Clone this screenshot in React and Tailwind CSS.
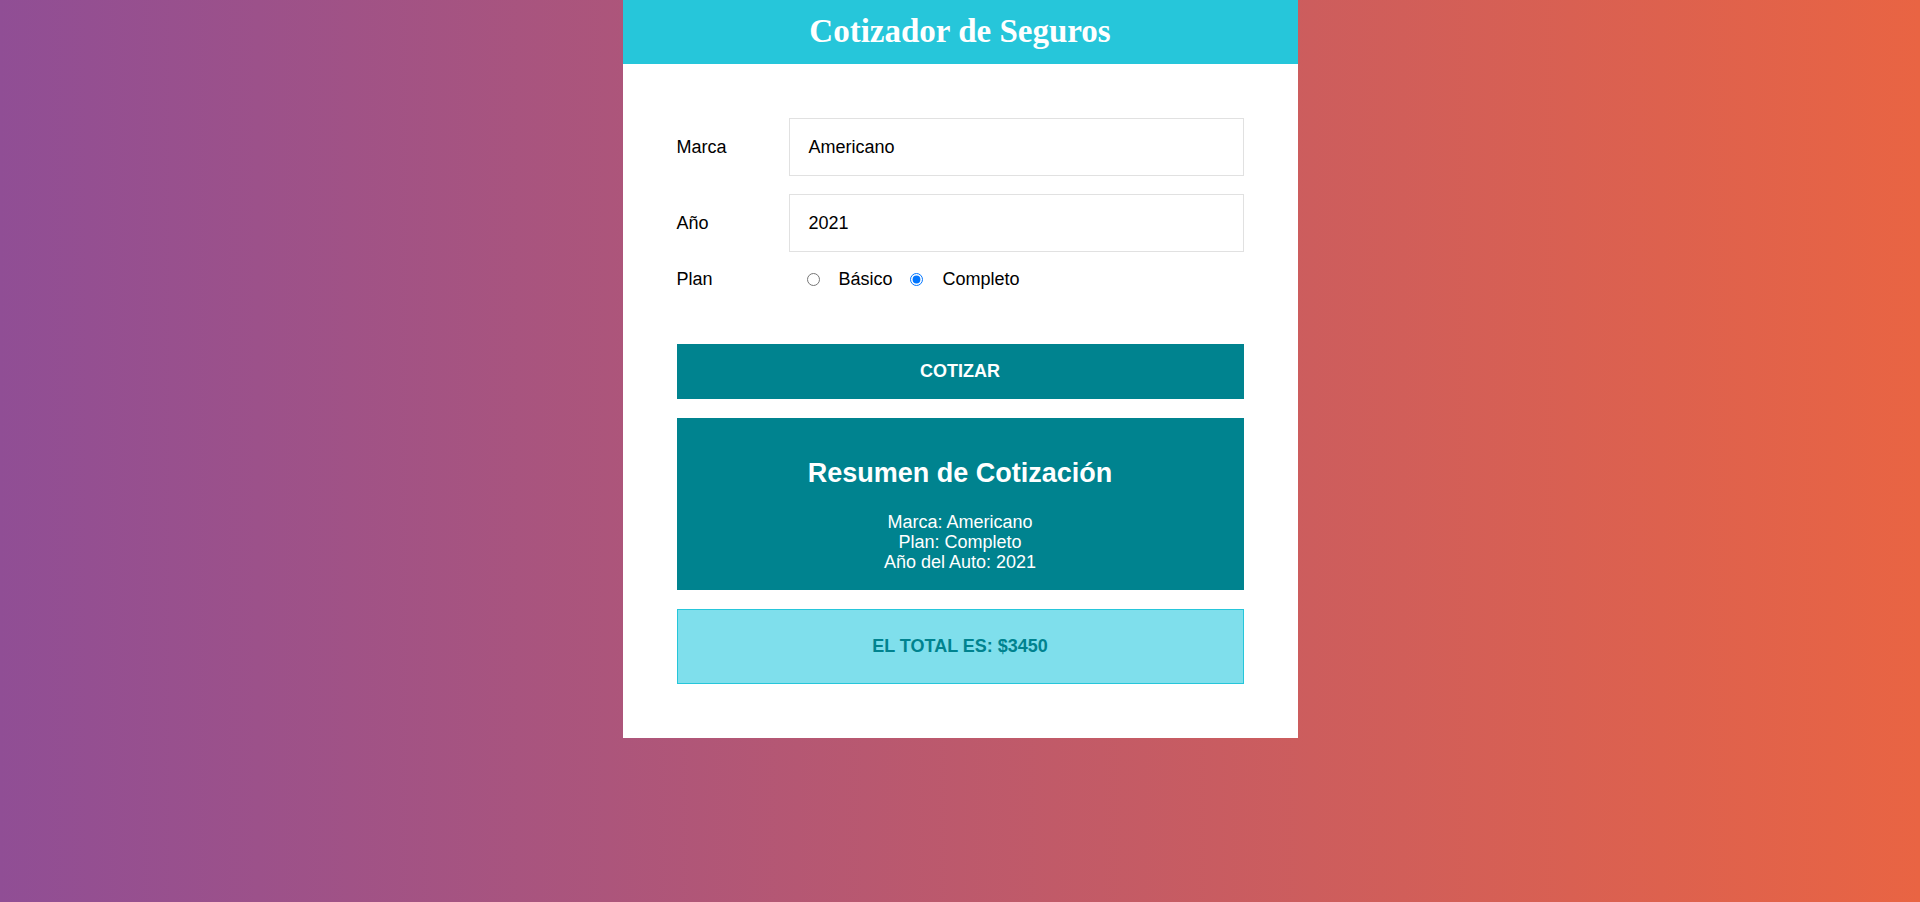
import React from "react";

const App = () => {
  return (
    <div className="min-h-screen w-full bg-[linear-gradient(to_right,#904e95,#e96443)] font-['Liberation_Sans',Arial,sans-serif]">
      <div className="mx-auto w-[675px] bg-white">
        <header className="h-[64px] bg-[#26c6da] flex items-center justify-center">
          <h1 className="text-white text-[33px] font-bold font-['Liberation_Serif',serif] leading-none -mt-[2px]">
            Cotizador de Seguros
          </h1>
        </header>

        <form className="p-[54px] text-[18px] text-black">
          <div className="flex items-center h-[58px]">
            <label className="w-[112px] shrink-0">Marca</label>
            <div className="flex-1 h-full border border-[#e1e1e1] flex items-center pl-[19px]">
              Americano
            </div>
          </div>

          <div className="flex items-center h-[58px] mt-[18px]">
            <label className="w-[112px] shrink-0">Año</label>
            <div className="flex-1 h-full border border-[#e1e1e1] flex items-center pl-[19px]">
              2021
            </div>
          </div>

          <div className="flex items-center mt-[17px] h-[21px]">
            <label className="w-[112px] shrink-0">Plan</label>
            <input type="radio" name="plan" className="ml-[18px] mr-[19px] w-[13px] h-[13px]" readOnly />
            <span>Básico</span>
            <input type="radio" name="plan" defaultChecked className="ml-[17px] mr-[20px] w-[13px] h-[13px]" />
            <span>Completo</span>
          </div>

          <button
            type="button"
            className="mt-[54px] w-full h-[55px] bg-[#00838f] text-white font-bold uppercase text-[18px]"
          >
            Cotizar
          </button>

          <div className="mt-[19px] bg-[#00838f] text-white text-center pt-[40px] pb-[18px]">
            <h2 className="text-[27px] font-bold leading-[30px]">Resumen de Cotización</h2>
            <div className="mt-[24px] leading-[20px]">
              <p>Marca: Americano</p>
              <p>Plan: Completo</p>
              <p>Año del Auto: 2021</p>
            </div>
          </div>

          <div className="mt-[19px] h-[75px] bg-[#7fdfec] border border-[#26c6da] flex items-center justify-center">
            <p className="text-[#00838f] font-bold uppercase text-[18px]">El total es: $3450</p>
          </div>
        </form>
      </div>
    </div>
  );
};

export default App;
